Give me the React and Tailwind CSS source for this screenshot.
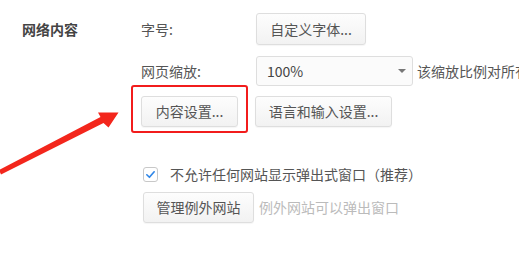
import React from "react";

const font = { fontFamily: '"Noto Sans CJK SC", "Noto Sans", sans-serif' };

function Btn({ children, className = "" }) {
  return (
    <button
      type="button"
      className={
        "flex items-center justify-center rounded-[3px] border border-[#dedede] bg-gradient-to-b from-[#fdfdfd] to-[#f2f2f2] text-[14px] text-[#555] shadow-[0_1px_1px_rgba(0,0,0,0.04)] " +
        className
      }
    >
      {children}
    </button>
  );
}

export default function App() {
  return (
    <div
      className="relative w-[519px] h-[258px] overflow-hidden bg-white"
      style={font}
    >
      {/* ARROW */}
      <svg
        className="absolute left-0 top-0 pointer-events-none"
        width="140"
        height="190"
        viewBox="0 0 140 190"
      >
        <polygon
          points="-1,170 100.5,117 98,112.5 118.5,112.5 108.5,127.5 103.5,123 1,174.5"
          fill="#f3261c"
        />
      </svg>

      <div className="flex pt-[13px]">
        {/* SECTION LABEL */}
        <div className="w-[141px] shrink-0 pl-[22px] pt-[6px] text-[14px] font-semibold text-[#444] leading-[20px]">
          网络内容
        </div>

        {/* CONTENT */}
        <div className="flex flex-col">
          {/* FONT SIZE */}
          <div className="flex items-center h-[32px]">
            <div className="w-[115px] text-[14px] text-[#555]">字号:</div>
            <Btn className="w-[110px] h-[32px]">自定义字体...</Btn>
          </div>

          {/* ZOOM */}
          <div className="flex items-center h-[30px] mt-[11px] whitespace-nowrap">
            <div className="w-[115px] text-[14px] text-[#555]">网页缩放:</div>
            <div className="flex items-center justify-between w-[157px] h-[30px] rounded-[3px] border border-[#dedede] bg-[#fbfbfb] pl-[10px] pr-[6px] text-[14px] text-[#444]">
              <span>100%</span>
              <span className="w-0 h-0 border-l-[4px] border-r-[4px] border-t-[4px] border-l-transparent border-r-transparent border-t-[#777]" />
            </div>
            <span className="ml-[4px] text-[14px] text-[#555]">
              该缩放比例对所有网页均有效
            </span>
          </div>

          {/* CONTENT / LANGUAGE */}
          <div className="flex items-center h-[31px] mt-[10px]">
            <div className="relative">
              <Btn className="w-[97px] h-[31px]">内容设置...</Btn>
              <span className="absolute left-[-10px] right-[-10px] top-[-11px] bottom-[-6px] rounded-[3px] border-2 border-[#f21c1c]" />
            </div>
            <Btn className="w-[137px] h-[31px] ml-[17px]">语言和输入设置...</Btn>
          </div>

          {/* POPUP CHECKBOX */}
          <div className="flex items-center h-[20px] mt-[37px] pl-[2px]">
            <span className="flex items-center justify-center w-[15px] h-[15px] rounded-[3px] border border-[#c8c8c8] bg-white">
              <svg width="11" height="11" viewBox="0 0 12 12">
                <path
                  d="M2 6.3 L4.8 9 L10 3"
                  fill="none"
                  stroke="#2f86e8"
                  strokeWidth="1.8"
                  strokeLinecap="round"
                  strokeLinejoin="round"
                />
              </svg>
            </span>
            <span className="ml-[12px] text-[14px] text-[#555]">
              不允许任何网站显示弹出式窗口（推荐）
            </span>
          </div>

          {/* EXCEPTIONS */}
          <div className="flex items-center h-[31px] mt-[8px] pl-[2px]">
            <Btn className="w-[111px] h-[31px]">管理例外网站</Btn>
            <span className="ml-[5px] text-[14px] text-[#bbb]">
              例外网站可以弹出窗口
            </span>
          </div>
        </div>
      </div>
    </div>
  );
}
